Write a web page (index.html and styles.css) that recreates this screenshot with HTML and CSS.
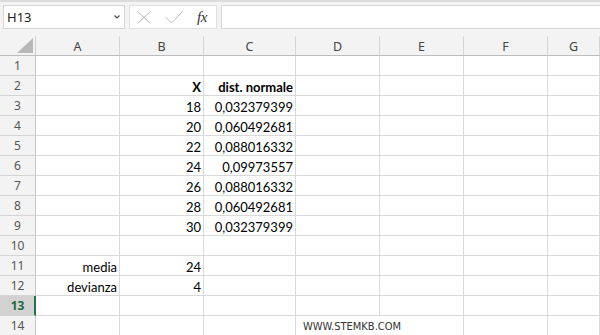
FILE: index.html
```html
<!DOCTYPE html>
<html>
<head>
<meta charset="utf-8">
<link rel="stylesheet" href="styles.css">
</head>
<body>
<div class="app">
  <div class="toolbar">
    <div class="namebox">
      <span class="name">H13</span>
      <svg class="chev" width="6" height="4" viewBox="0 0 6 4"><path d="M0.5 0.5 L3 3 L5.5 0.5" fill="none" stroke="#444" stroke-width="1.1"/></svg>
    </div>
    <div class="fbtns">
      <svg class="ico" width="14" height="13" viewBox="0 0 14 13"><path d="M0.5 0.5 L13.5 12.5 M13.5 0.5 L0.5 12.5" stroke="#bdbdbd" stroke-width="1" fill="none"/></svg>
      <svg class="ico" width="18" height="13" viewBox="0 0 18 13"><path d="M0.5 6 L6.5 12 L17.5 0.5" stroke="#bdbdbd" stroke-width="1" fill="none"/></svg>
      <span class="fx">fx</span>
    </div>
    <div class="formula"></div>
  </div>

  <div class="sheet">
    <div class="corner"><svg width="16" height="15" viewBox="0 0 16 15"><polygon points="16,0 16,15 0,15" fill="#b8b8b8"/></svg></div>
    <div class="ch">A</div><div class="ch">B</div><div class="ch">C</div><div class="ch">D</div><div class="ch">E</div><div class="ch">F</div><div class="ch">G</div>

    <div class="rh">1</div><div class="c"></div><div class="c"></div><div class="c"></div><div class="c"></div><div class="c"></div><div class="c"></div><div class="c"></div>
    <div class="rh">2</div><div class="c"></div><div class="c n b">X</div><div class="c n b">dist. normale</div><div class="c"></div><div class="c"></div><div class="c"></div><div class="c"></div>
    <div class="rh">3</div><div class="c"></div><div class="c n">18</div><div class="c n">0,032379399</div><div class="c"></div><div class="c"></div><div class="c"></div><div class="c"></div>
    <div class="rh">4</div><div class="c"></div><div class="c n">20</div><div class="c n">0,060492681</div><div class="c"></div><div class="c"></div><div class="c"></div><div class="c"></div>
    <div class="rh">5</div><div class="c"></div><div class="c n">22</div><div class="c n">0,088016332</div><div class="c"></div><div class="c"></div><div class="c"></div><div class="c"></div>
    <div class="rh">6</div><div class="c"></div><div class="c n">24</div><div class="c n">0,09973557</div><div class="c"></div><div class="c"></div><div class="c"></div><div class="c"></div>
    <div class="rh">7</div><div class="c"></div><div class="c n">26</div><div class="c n">0,088016332</div><div class="c"></div><div class="c"></div><div class="c"></div><div class="c"></div>
    <div class="rh">8</div><div class="c"></div><div class="c n">28</div><div class="c n">0,060492681</div><div class="c"></div><div class="c"></div><div class="c"></div><div class="c"></div>
    <div class="rh">9</div><div class="c"></div><div class="c n">30</div><div class="c n">0,032379399</div><div class="c"></div><div class="c"></div><div class="c"></div><div class="c"></div>
    <div class="rh">10</div><div class="c"></div><div class="c"></div><div class="c"></div><div class="c"></div><div class="c"></div><div class="c"></div><div class="c"></div>
    <div class="rh">11</div><div class="c n">media</div><div class="c n">24</div><div class="c"></div><div class="c"></div><div class="c"></div><div class="c"></div><div class="c"></div>
    <div class="rh">12</div><div class="c n">devianza</div><div class="c n">4</div><div class="c"></div><div class="c"></div><div class="c"></div><div class="c"></div><div class="c"></div>
    <div class="rh sel">13</div><div class="c"></div><div class="c"></div><div class="c"></div><div class="c"></div><div class="c"></div><div class="c"></div><div class="c"></div>
    <div class="rh">14</div><div class="c"></div><div class="c"></div><div class="c"></div><div class="c wm">WWW.STEMKB.COM</div><div class="c"></div><div class="c"></div>
  </div>
</div>
</body>
</html>
```

FILE: styles.css
```css
html, body {
  margin: 0;
  padding: 0;
  background: #ffffff;
}
.app {
  width: 600px;
  height: 335px;
  overflow: hidden;
  background: #ffffff;
}
.toolbar {
  height: 36px;
  box-sizing: border-box;
  background: #f3f3f3;
  border-top: 2px solid #dcdcdc;
  padding: 3px 0 0 3px;
  display: flex;
  gap: 4px;
  align-items: flex-start;
}
.namebox {
  width: 122px;
  height: 24px;
  box-sizing: border-box;
  background: #fff;
  border: 1px solid #d6d6d6;
  display: flex;
  align-items: center;
  justify-content: space-between;
  padding: 0 4px 0 3px;
}
.name {
  font-family: "Noto Sans", sans-serif;
  font-size: 13px;
  color: #222;
}
.chev { display: block; }
.fbtns {
  width: 88px;
  height: 24px;
  box-sizing: border-box;
  background: #fff;
  border: 1px solid #e0e0e0;
  display: flex;
  align-items: center;
  padding: 0 0 0 7px;
}
.fbtns .ico { display: block; }
.fbtns .ico + .ico { margin-left: 14px; }
.fx {
  font-family: "Liberation Serif", serif;
  font-style: italic;
  font-size: 15px;
  color: #333;
  margin-left: 14px;
  letter-spacing: -0.5px;
}
.formula {
  flex: 1;
  height: 24px;
  box-sizing: border-box;
  background: #fff;
  border: 1px solid #d6d6d6;
  border-right: none;
}
.sheet {
  display: grid;
  grid-template-columns: 36px 84px 84px 92px 84px 84px 84px 1fr;
  grid-auto-rows: 20px;
}
.corner, .ch {
  background: #f3f3f3;
  border-bottom: 1px solid #bdbdbd;
  box-sizing: border-box;
}
.corner {
  border-right: 1px solid #d0d0d0;
  display: flex;
  align-items: flex-start;
  justify-content: flex-end;
  padding: 2px 2px 0 0;
}
.corner svg { display: block; }
.ch {
  border-right: 1px solid #d4d4d4;
  font-family: "Noto Sans", sans-serif;
  font-size: 12.5px;
  color: #444;
  text-align: center;
  line-height: 19px;
  border-top: 1px solid #f3f3f3;
}
.rh {
  background: #f3f3f3;
  box-sizing: border-box;
  border-right: 1px solid #c8c8c8;
  border-bottom: 1px solid #d4d4d4;
  font-family: "Noto Sans", sans-serif;
  font-size: 12px;
  color: #555;
  text-align: center;
  line-height: 19px;
}
.rh.sel {
  background: #d2d2d2;
  border-right: 2px solid #217346;
  color: #1d6b41;
  font-weight: bold;
  padding-left: 1px;
}
.c {
  box-sizing: border-box;
  border-right: 1px solid #d9d9d9;
  border-bottom: 1px solid #d9d9d9;
  font-family: Lato, "Liberation Sans", sans-serif;
  font-size: 13px;
  color: #000;
  padding: 3px 2px 0 2px;
  line-height: 16px;
  white-space: nowrap;
}
.n { text-align: right; }
.b { font-weight: bold; }
.wm {
  grid-column: span 2;
  font-family: "DejaVu Sans Condensed", "DejaVu Sans", sans-serif;
  font-size: 11px;
  color: #333;
  padding-left: 7px;
}
```
